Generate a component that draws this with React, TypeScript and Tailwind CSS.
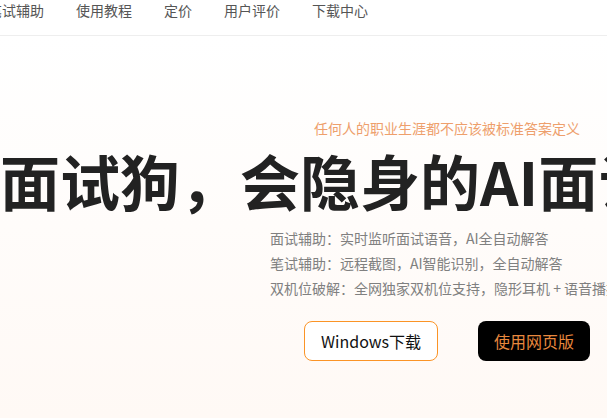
const navItems = ["笔试辅助", "使用教程", "定价", "用户评价", "下载中心"];

const features = [
  "面试辅助：实时监听面试语音，AI全自动解答",
  "笔试辅助：远程截图，AI智能识别，全自动解答",
  "双机位破解：全网独家双机位支持，隐形耳机 + 语音播报",
];

export default function App() {
  return (
    <div className="h-[418px] w-[607px] overflow-hidden bg-white font-['Noto_Sans_CJK_SC','Noto_Sans',sans-serif]">
      {/* 顶部导航，左侧被裁掉一部分 */}
      <header className="flex h-9 items-start border-b border-[#eeeeee] bg-white">
        <nav className="-ml-3 flex gap-8 whitespace-nowrap text-sm leading-5 text-[#555555]">
          {navItems.map((item) => (
            <span key={item}>{item}</span>
          ))}
        </nav>
      </header>

      <main className="h-[382px] bg-linear-to-b from-white to-[#fff9f5] pt-[82px]">
        <p className="flex justify-end whitespace-nowrap pr-[27px] text-sm leading-5 text-[#ee9f6c]">
          任何人的职业生涯都不应该被标准答案定义
        </p>

        <h1 className="mt-3 whitespace-nowrap text-[60px] font-bold leading-[60px] text-[#222222]">
          面试狗，会隐身的AI面试助手
        </h1>

        <ul className="mt-4 whitespace-nowrap pl-[270px] text-sm leading-[25px] text-[#808080]">
          {features.map((f) => (
            <li key={f}>{f}</li>
          ))}
        </ul>

        <div className="mt-5 flex gap-10 pl-[304px]">
          <button className="flex h-10 items-center whitespace-nowrap rounded-lg border border-[#fb9426] bg-white px-4 text-base text-[#111111]">
            Windows下载
          </button>
          <button className="flex h-10 items-center whitespace-nowrap rounded-lg bg-black px-4 text-base text-[#e8883e]">
            使用网页版
          </button>
        </div>
      </main>
    </div>
  );
}
